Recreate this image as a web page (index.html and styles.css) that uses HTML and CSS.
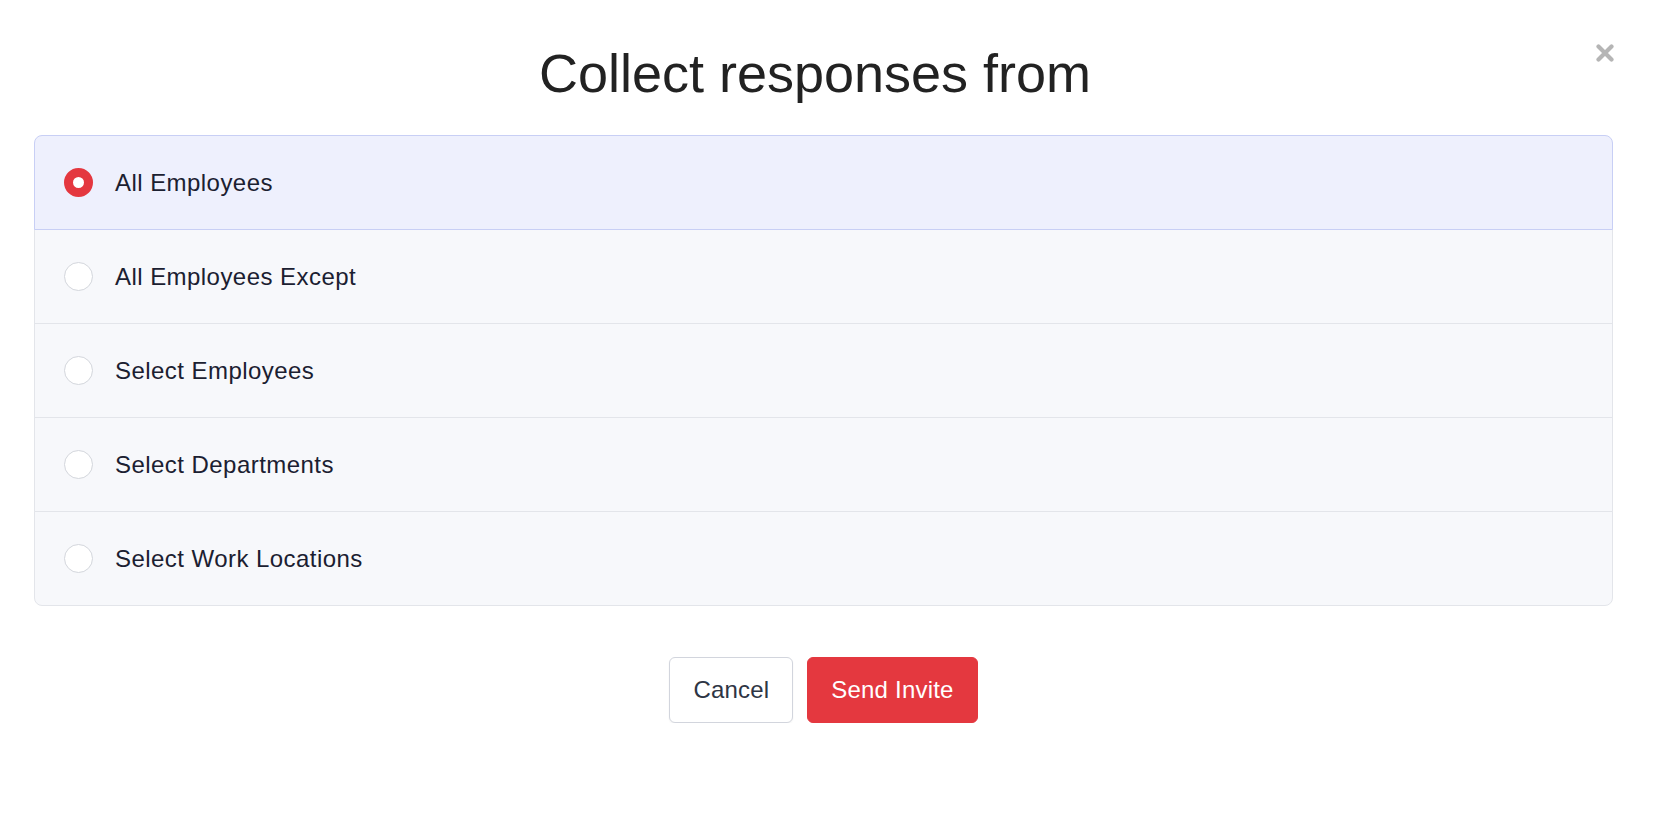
FILE: index.html
```html
<!DOCTYPE html>
<html lang="en">
<head>
<meta charset="utf-8">
<title>Collect responses from</title>
<link rel="stylesheet" href="styles.css">
</head>
<body>
<div class="modal">
  <button class="close" aria-label="Close">
    <svg width="18" height="18" viewBox="0 0 18 18"><path d="M2.5 2.5 L15.5 15.5 M15.5 2.5 L2.5 15.5" stroke="#b5b5b5" stroke-width="4.2" stroke-linecap="round"/></svg>
  </button>
  <h1 class="title">Collect responses from</h1>
  <div class="options">
    <label class="option selected"><span class="radio"></span><span class="label">All Employees</span></label>
    <label class="option"><span class="radio"></span><span class="label">All Employees Except</span></label>
    <label class="option"><span class="radio"></span><span class="label">Select Employees</span></label>
    <label class="option"><span class="radio"></span><span class="label">Select Departments</span></label>
    <label class="option"><span class="radio"></span><span class="label">Select Work Locations</span></label>
  </div>
  <div class="actions">
    <button class="btn btn-cancel">Cancel</button>
    <button class="btn btn-primary">Send Invite</button>
  </div>
</div>
</body>
</html>
```
FILE: styles.css
```css
* { box-sizing: border-box; }
html, body { margin: 0; padding: 0; background: #fff; }
body { font-family: "Liberation Sans", Arial, sans-serif; }

.modal {
  position: relative;
  padding: 41px 40px 0 34px;
}

.close {
  position: absolute;
  top: 44px;
  right: 39px;
  width: 18px;
  height: 18px;
  padding: 0;
  border: 0;
  background: transparent;
  display: flex;
}

.title {
  margin: 0 0 30px 0;
  padding-right: 17px;
  text-align: center;
  font-size: 54px;
  line-height: 64px;
  font-weight: 400;
  color: #222222;
}

.options {
  display: flex;
  flex-direction: column;
}

.option {
  position: relative;
  display: flex;
  align-items: center;
  gap: 22px;
  height: 95px;
  padding-left: 29px;
  background: #f7f8fb;
  border: 1px solid #e3e5ea;
  margin-top: -1px;
}
.option:first-child { margin-top: 0; border-radius: 8px 8px 0 0; }
.option:last-child { border-radius: 0 0 8px 8px; }

.option.selected {
  background: #eef0fd;
  border-color: #c8cff5;
  z-index: 1;
}

.radio {
  width: 29px;
  height: 29px;
  border-radius: 50%;
  background: #fff;
  border: 1px solid #d3d6dc;
  flex: none;
}
.option.selected .radio {
  background: #fff;
  border: 9px solid #e4373f;
}

.label {
  font-size: 24px;
  letter-spacing: 0.45px;
  color: #1b2031;
}

.actions {
  display: flex;
  justify-content: center;
  gap: 14px;
  margin-top: 51px;
}

.btn {
  height: 66px;
  padding: 0 23px;
  border-radius: 6px;
  font-family: "Liberation Sans", Arial, sans-serif;
  font-size: 24px;
  letter-spacing: 0.2px;
  cursor: pointer;
}
.btn-cancel {
  background: #fff;
  border: 1px solid #d2d5dd;
  color: #2e3544;
  box-shadow: 0 1px 2px rgba(0,0,0,0.05);
}
.btn-primary {
  background: #e4383f;
  border: 1px solid #e4383f;
  color: #fff;
}
```
